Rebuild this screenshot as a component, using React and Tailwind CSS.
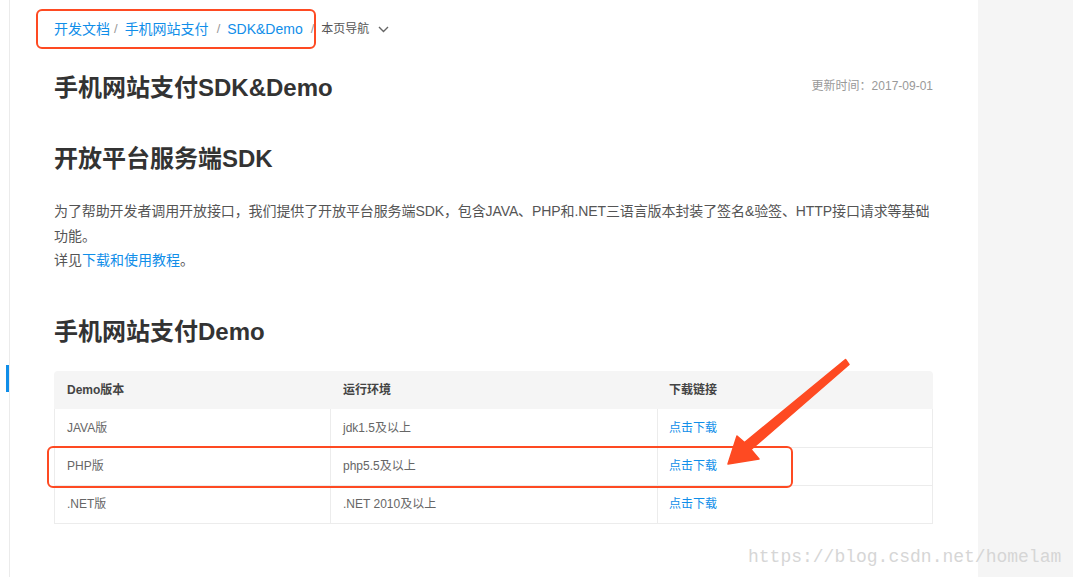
import React from "react";

const font = { fontFamily: '"Liberation Sans", "Noto Sans CJK SC", sans-serif' };

const rows = [
  ["JAVA版", "jdk1.5及以上"],
  ["PHP版", "php5.5及以上"],
  [".NET版", ".NET 2010及以上"],
];

export default function App() {
  return (
    <div className="relative flex w-[1073px] h-[577px] overflow-hidden bg-white" style={font}>
      {/* left rail */}
      <div className="w-[10px] shrink-0 border-r border-[#ebebeb]">
        <div className="mt-[365px] ml-[6px] w-[3px] h-[27px] bg-[#108ee9]" />
      </div>

      {/* main */}
      <div className="w-[968px] shrink-0 pl-[44px] pr-[45px]">
        <div className="h-[58px] flex items-center text-[14px]">
          <span className="text-[#108ee9]">开发文档</span>
          <span className="text-[#999] text-[13px] mx-[4px]">/</span>
          <span className="text-[#108ee9] ml-[3px]">手机网站支付</span>
          <span className="text-[#999] text-[13px] ml-[8px] mr-[7px]">/</span>
          <span className="text-[#108ee9]">SDK&amp;Demo</span>
          <span className="text-[#999] text-[13px] ml-[8px] mr-[7px]">/</span>
          <span className="text-[#555] text-[12px]">本页导航</span>
          <svg className="ml-[9px]" width="11" height="7" viewBox="0 0 11 7" fill="none">
            <path d="M1 1l4.5 4.5L10 1" stroke="#666" strokeWidth="1.4" />
          </svg>
        </div>

        <div className="mt-[14px] flex items-center justify-between">
          <h1 className="text-[24px] leading-[32px] font-bold text-[#333]">手机网站支付SDK&amp;Demo</h1>
          <span className="text-[12px] text-[#999] -mt-[4px]">更新时间：2017-09-01</span>
        </div>

        <h2 className="mt-[39px] text-[24px] leading-[32px] font-bold text-[#333]">开放平台服务端SDK</h2>

        <div className="mt-[24px] text-[14px] leading-[24.5px] text-[#555]">
          <div className="whitespace-nowrap tracking-[-0.1px]">
            为了帮助开发者调用开放接口，我们提供了开放平台服务端SDK，包含JAVA、PHP和.NET三语言版本封装了签名&amp;验签、HTTP接口请求等基础
          </div>
          <div>功能。</div>
          <div>
            详见<span className="text-[#108ee9]">下载和使用教程</span>。
          </div>
        </div>

        <h2 className="mt-[43px] text-[24px] leading-[32px] font-bold text-[#333]">手机网站支付Demo</h2>

        <div className="mt-[23px] w-[879px] text-[12px]">
          <div className="grid grid-cols-[276px_327px_276px] h-[38px] items-center bg-[#f5f5f5] rounded-t-[4px] font-bold text-[#444]">
            <div className="pl-[13px]">Demo版本</div>
            <div className="pl-[13px]">运行环境</div>
            <div className="pl-[12px]">下载链接</div>
          </div>
          <div className="border border-t-0 border-[#ececec]">
            {rows.map((r, i) => (
              <div
                key={i}
                className={`grid grid-cols-[275px_327px_275px] h-[38px] text-[#666] ${i > 0 ? "border-t border-[#ececec]" : ""}`}
              >
                <div className="pl-[12px] flex items-center">{r[0]}</div>
                <div className="pl-[12px] flex items-center border-l border-[#ececec]">{r[1]}</div>
                <div className="pl-[11px] flex items-center border-l border-[#ececec] text-[#108ee9]">点击下载</div>
              </div>
            ))}
          </div>
        </div>
      </div>

      {/* right gray panel */}
      <div className="flex-1 bg-[#f5f5f5]" />

      {/* annotations */}
      <div className="absolute left-[36px] top-[9px] w-[280px] h-[40px] border-2 border-[#fe4a22] rounded-[6px]" />
      <div className="absolute left-[47px] top-[446px] w-[746px] h-[42px] border-2 border-[#fe4a22] rounded-[6px]" />
      <svg className="absolute left-0 top-0" width="1073" height="577" viewBox="0 0 1073 577">
        <polygon
          points="845.5,359.5 744.5,442.5 737,436 728,464 759,459 751,449.5 849,364.5"
          fill="#fe4a22"
          stroke="#fe4a22"
          strokeWidth="1.5"
          strokeLinejoin="round"
        />
      </svg>

      <div
        className="absolute left-[748px] top-[545px] text-[18px] leading-[24px] text-[#d6d6d6]"
        style={{ fontFamily: '"Liberation Mono", monospace' }}
      >
        https://blog.csdn.net/homelam
      </div>
    </div>
  );
}
